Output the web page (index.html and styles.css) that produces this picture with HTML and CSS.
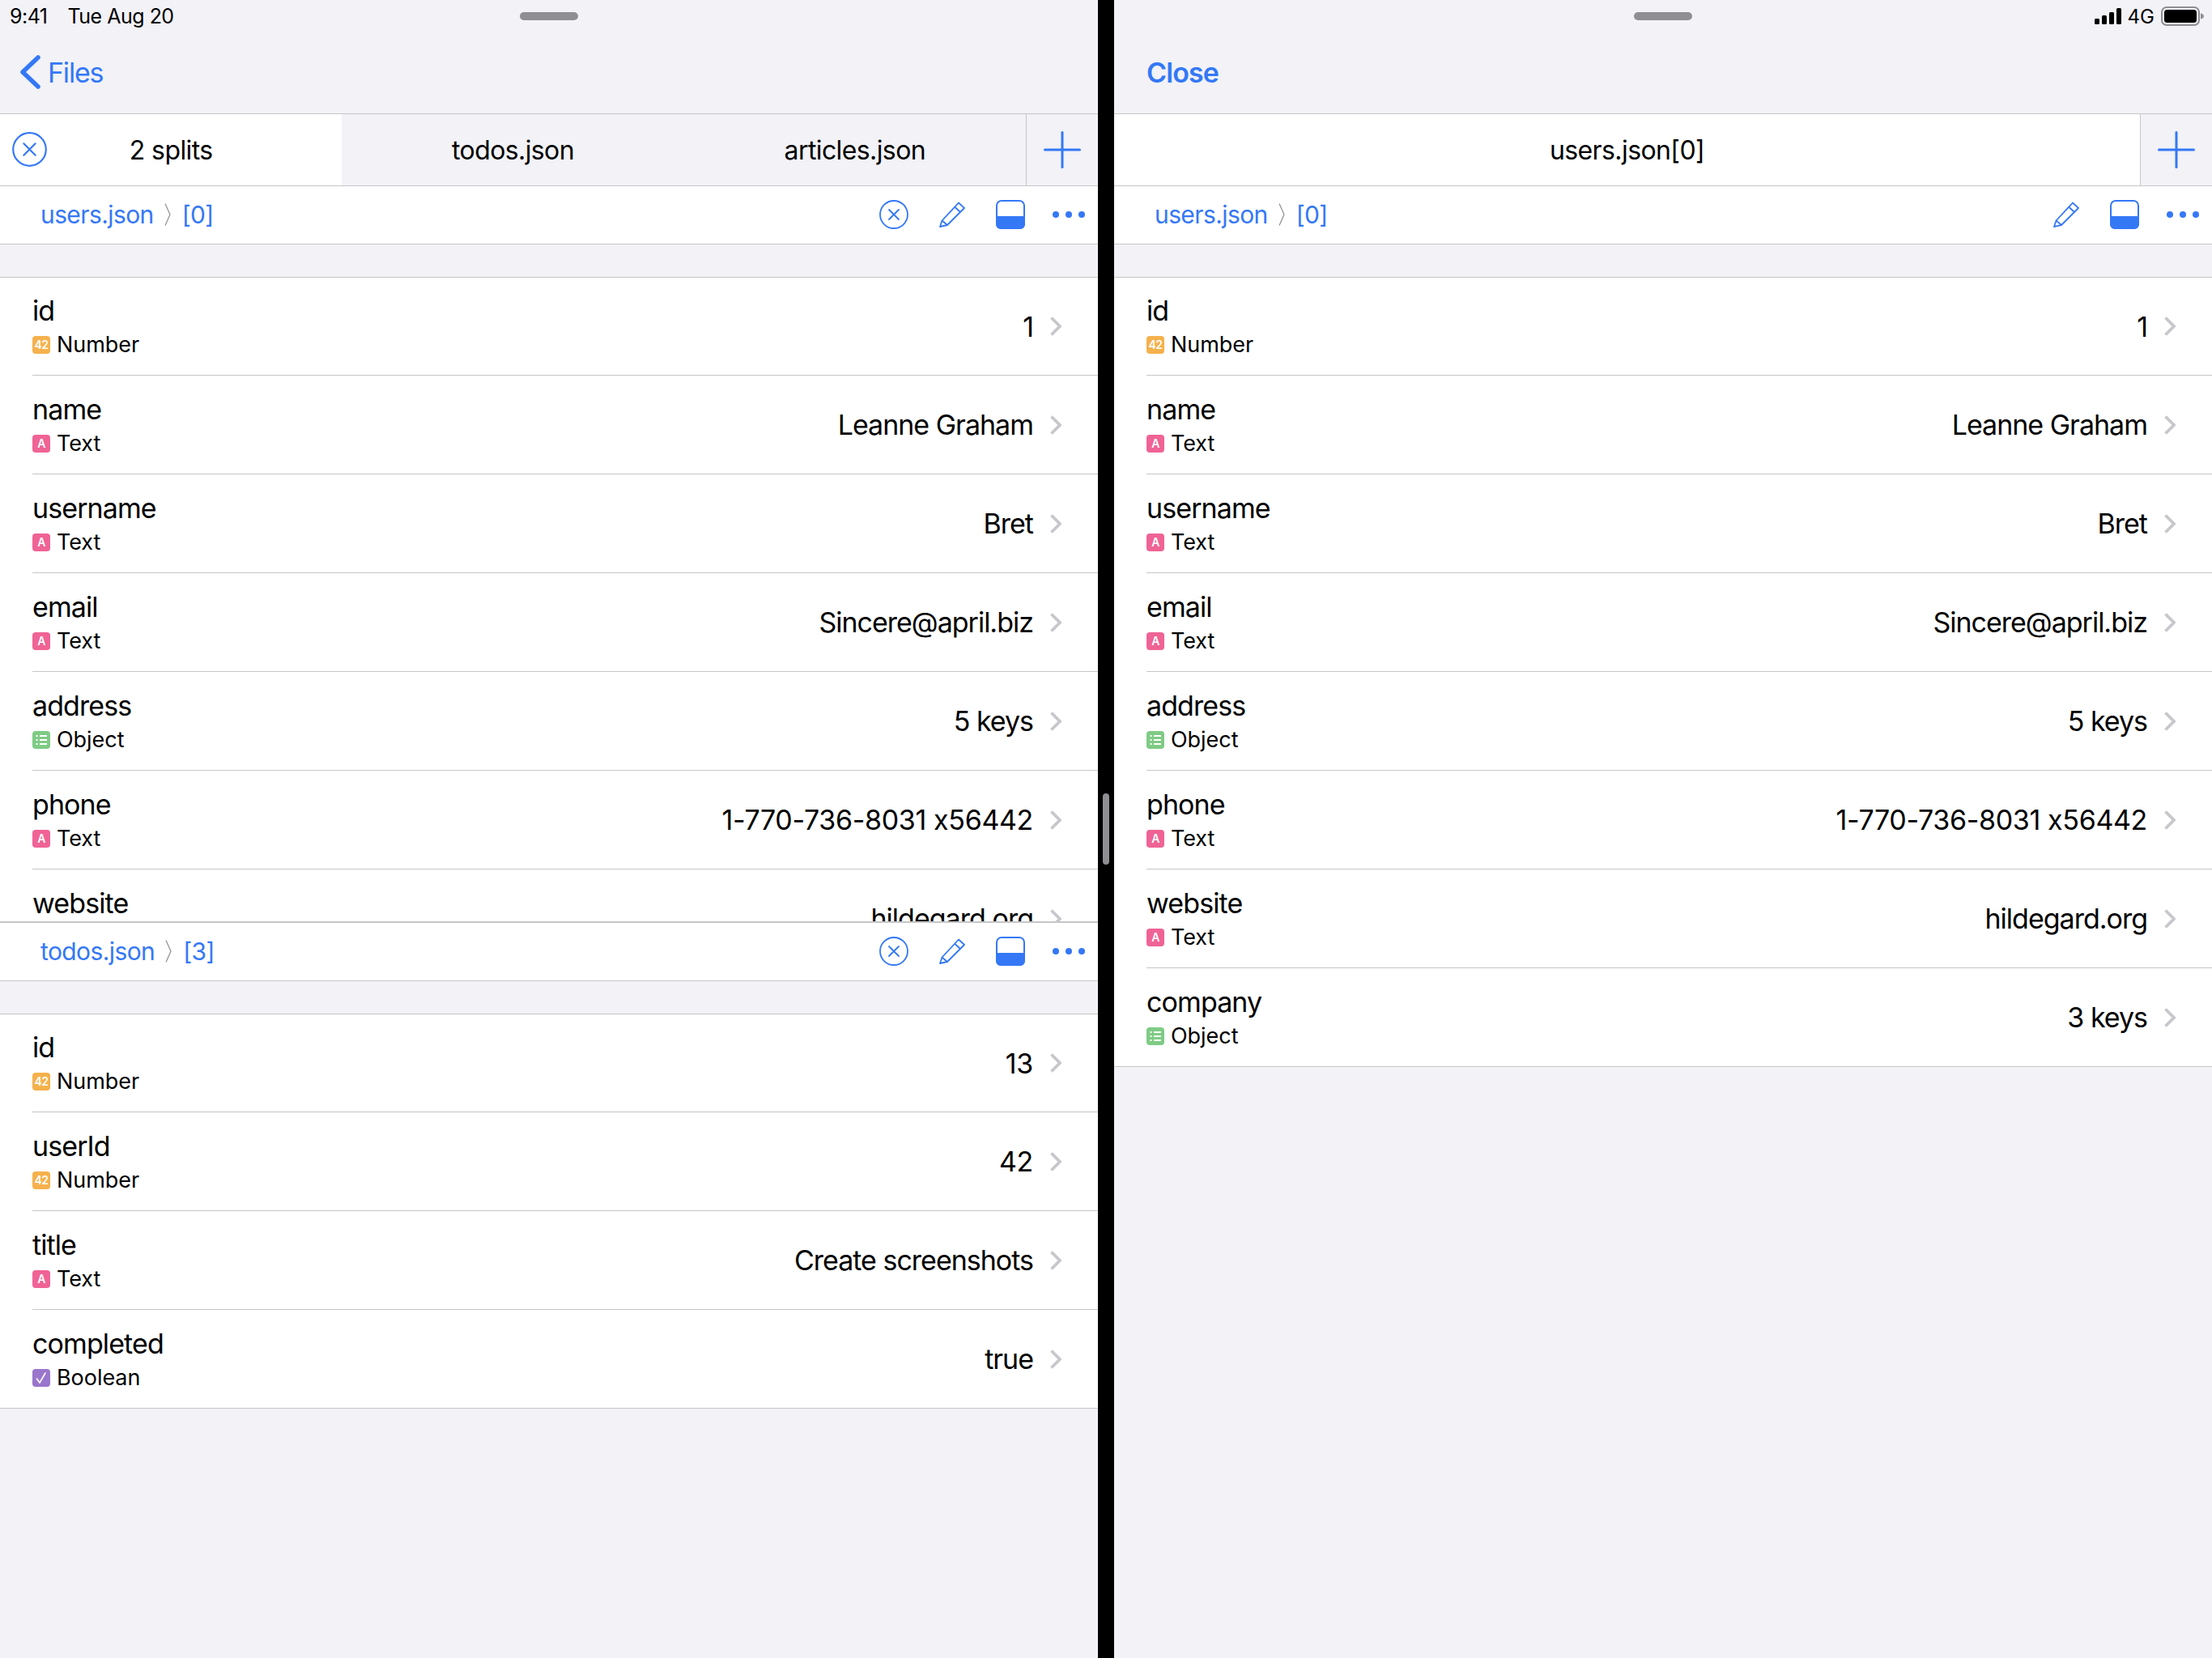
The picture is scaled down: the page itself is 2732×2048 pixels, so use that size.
FILE: index.html
```html
<!DOCTYPE html>
<html lang="en">

<head>
    <meta charset="UTF-8">
    <title>JSON Viewer</title>
    <link rel="stylesheet" href="styles.css">
</head>

<body>
    <svg class="defs" width="0" height="0">
        <symbol id="i-close" viewBox="0 0 36 36">
            <circle cx="18" cy="18" r="17" fill="none" stroke="currentColor" stroke-width="1.8" />
            <path d="M12 12L24 24M24 12L12 24" fill="none" stroke="currentColor" stroke-width="1.8" stroke-linecap="round" />
        </symbol>
        <symbol id="i-pencil" viewBox="0 0 32 32">
            <path d="M1 31L3.5 23.5L24 1.5L31 8L10 29ZM3.5 23.5L10 29M19 6.5L26 13" fill="none" stroke="currentColor" stroke-width="1.8" stroke-linejoin="round" />
        </symbol>
        <symbol id="i-panel" viewBox="0 0 36 36">
            <rect x="1" y="1" width="34" height="34" rx="6" fill="none" stroke="currentColor" stroke-width="2" />
            <path d="M0 20H36V30A6 6 0 0 1 30 36H6A6 6 0 0 1 0 30Z" fill="currentColor" />
        </symbol>
        <symbol id="i-dots" viewBox="0 0 40 8">
            <circle cx="4" cy="4" r="4" fill="currentColor" />
            <circle cx="20" cy="4" r="4" fill="currentColor" />
            <circle cx="36" cy="4" r="4" fill="currentColor" />
        </symbol>
        <symbol id="i-plus" viewBox="0 0 46 46">
            <path d="M23 1.5V44.5M1.5 23H44.5" fill="none" stroke="currentColor" stroke-width="3" stroke-linecap="round" />
        </symbol>
        <symbol id="i-chev" viewBox="0 0 14 24">
            <path d="M1.5 1.5L12 12L1.5 22.5" fill="none" stroke="currentColor" stroke-width="3.8" />
        </symbol>
        <symbol id="i-crumb" viewBox="0 0 8 28">
            <path d="M1 0.5L7 14L1 27.5" fill="none" stroke="currentColor" stroke-width="1.2" />
        </symbol>
        <symbol id="i-object" viewBox="0 0 22 22">
            <path d="M4.5 6H6.5M9 6H18M4.5 11H6.5M9 11H18M4.5 16H6.5M9 16H18" fill="none" stroke="#fff" stroke-width="2" />
        </symbol>
        <symbol id="i-check" viewBox="0 0 22 22">
            <path d="M5.5 12L9 17L16 5" fill="none" stroke="#fff" stroke-width="1.6" stroke-linecap="round" />
        </symbol>
    </svg>

    <div class="app">
        <div class="pane">
            <div class="status">
                <div class="status-left"><span>9:41</span><span>Tue Aug 20</span></div>
                <div class="home-grip"></div>
                <div></div>
            </div>
            <div class="nav">
                <svg class="back" width="25" height="42" viewBox="0 0 25 42"><path d="M22 3L3 21L22 39" fill="none" stroke="currentColor" stroke-width="5.5" stroke-linecap="round" stroke-linejoin="round" /></svg>
                <span class="nav-link">Files</span>
            </div>
            <div class="tabs">
                <div class="tab tab-on">
                    <svg class="tab-close" width="43" height="43"><use href="#i-close" /></svg>
                    2 splits
                </div>
                <div class="tab">todos.json</div>
                <div class="tab">articles.json</div>
                <div class="tab-add"><svg width="46" height="46"><use href="#i-plus" /></svg></div>
            </div>

            <div class="split split-top">
                <div class="crumbs">
                    <span>users.json</span>
                    <svg class="crumb-sep" width="8" height="28"><use href="#i-crumb" /></svg>
                    <span>[0]</span>
                    <div class="tools">
                        <svg width="36" height="36"><use href="#i-close" /></svg>
                        <svg width="32" height="32"><use href="#i-pencil" /></svg>
                        <svg width="36" height="36"><use href="#i-panel" /></svg>
                        <svg class="dots" width="40" height="8"><use href="#i-dots" /></svg>
                    </div>
                </div>
                <div class="list">
                    <div class="row"><div class="row-in">
                        <div class="key"><div class="key-name">id</div><div class="key-type"><span class="badge b-num">42</span>Number</div></div>
                        <div class="val">1</div><svg class="chev" width="14" height="24"><use href="#i-chev" /></svg>
                    </div></div>
                    <div class="row"><div class="row-in">
                        <div class="key"><div class="key-name">name</div><div class="key-type"><span class="badge b-text">A</span>Text</div></div>
                        <div class="val">Leanne Graham</div><svg class="chev" width="14" height="24"><use href="#i-chev" /></svg>
                    </div></div>
                    <div class="row"><div class="row-in">
                        <div class="key"><div class="key-name">username</div><div class="key-type"><span class="badge b-text">A</span>Text</div></div>
                        <div class="val">Bret</div><svg class="chev" width="14" height="24"><use href="#i-chev" /></svg>
                    </div></div>
                    <div class="row"><div class="row-in">
                        <div class="key"><div class="key-name">email</div><div class="key-type"><span class="badge b-text">A</span>Text</div></div>
                        <div class="val">Sincere@april.biz</div><svg class="chev" width="14" height="24"><use href="#i-chev" /></svg>
                    </div></div>
                    <div class="row"><div class="row-in">
                        <div class="key"><div class="key-name">address</div><div class="key-type"><span class="badge b-obj"><svg width="22" height="22"><use href="#i-object" /></svg></span>Object</div></div>
                        <div class="val">5 keys</div><svg class="chev" width="14" height="24"><use href="#i-chev" /></svg>
                    </div></div>
                    <div class="row"><div class="row-in">
                        <div class="key"><div class="key-name">phone</div><div class="key-type"><span class="badge b-text">A</span>Text</div></div>
                        <div class="val val-num">1-770-736-8031 x56442</div><svg class="chev" width="14" height="24"><use href="#i-chev" /></svg>
                    </div></div>
                    <div class="row"><div class="row-in">
                        <div class="key"><div class="key-name">website</div><div class="key-type"></div></div>
                        <div class="val">hildegard.org</div><svg class="chev" width="14" height="24"><use href="#i-chev" /></svg>
                    </div></div>
                </div>
            </div>

            <div class="split">
                <div class="crumbs">
                    <span>todos.json</span>
                    <svg class="crumb-sep" width="8" height="28"><use href="#i-crumb" /></svg>
                    <span>[3]</span>
                    <div class="tools">
                        <svg width="36" height="36"><use href="#i-close" /></svg>
                        <svg width="32" height="32"><use href="#i-pencil" /></svg>
                        <svg width="36" height="36"><use href="#i-panel" /></svg>
                        <svg class="dots" width="40" height="8"><use href="#i-dots" /></svg>
                    </div>
                </div>
                <div class="list">
                    <div class="row"><div class="row-in">
                        <div class="key"><div class="key-name">id</div><div class="key-type"><span class="badge b-num">42</span>Number</div></div>
                        <div class="val val-num">13</div><svg class="chev" width="14" height="24"><use href="#i-chev" /></svg>
                    </div></div>
                    <div class="row"><div class="row-in">
                        <div class="key"><div class="key-name">userId</div><div class="key-type"><span class="badge b-num">42</span>Number</div></div>
                        <div class="val val-num">42</div><svg class="chev" width="14" height="24"><use href="#i-chev" /></svg>
                    </div></div>
                    <div class="row"><div class="row-in">
                        <div class="key"><div class="key-name">title</div><div class="key-type"><span class="badge b-text">A</span>Text</div></div>
                        <div class="val">Create screenshots</div><svg class="chev" width="14" height="24"><use href="#i-chev" /></svg>
                    </div></div>
                    <div class="row"><div class="row-in">
                        <div class="key"><div class="key-name">completed</div><div class="key-type"><span class="badge b-bool"><svg width="22" height="22"><use href="#i-check" /></svg></span>Boolean</div></div>
                        <div class="val">true</div><svg class="chev" width="14" height="24"><use href="#i-chev" /></svg>
                    </div></div>
                </div>
            </div>
        </div>

        <div class="divider"><div class="divider-grip"></div></div>

        <div class="pane">
            <div class="status">
                <div></div>
                <div class="home-grip"></div>
                <div class="status-right">
                    <svg width="33" height="20" viewBox="0 0 33 20">
                        <rect x="0" y="13" width="6" height="7" rx="1.5" />
                        <rect x="9" y="9" width="6" height="11" rx="1.5" />
                        <rect x="18" y="5" width="6" height="15" rx="1.5" />
                        <rect x="27" y="0" width="6" height="20" rx="1.5" />
                    </svg>
                    <span>4G</span>
                    <svg width="53" height="24" viewBox="0 0 53 24">
                        <rect x="1" y="1" width="46" height="22" rx="6" fill="none" stroke="#8e8e93" stroke-width="2" />
                        <rect x="4" y="4" width="40" height="16" rx="3.5" />
                        <path d="M49 8.5C51.5 9 53 10.5 53 12C53 13.5 51.5 15 49 15.5Z" fill="#8e8e93" />
                    </svg>
                </div>
            </div>
            <div class="nav">
                <span class="nav-link nav-close">Close</span>
            </div>
            <div class="tabs">
                <div class="tab tab-on">users.json[0]</div>
                <div class="tab-add"><svg width="46" height="46"><use href="#i-plus" /></svg></div>
            </div>

            <div class="split">
                <div class="crumbs">
                    <span>users.json</span>
                    <svg class="crumb-sep" width="8" height="28"><use href="#i-crumb" /></svg>
                    <span>[0]</span>
                    <div class="tools">
                        <svg width="32" height="32"><use href="#i-pencil" /></svg>
                        <svg width="36" height="36"><use href="#i-panel" /></svg>
                        <svg class="dots" width="40" height="8"><use href="#i-dots" /></svg>
                    </div>
                </div>
                <div class="list">
                    <div class="row"><div class="row-in">
                        <div class="key"><div class="key-name">id</div><div class="key-type"><span class="badge b-num">42</span>Number</div></div>
                        <div class="val">1</div><svg class="chev" width="14" height="24"><use href="#i-chev" /></svg>
                    </div></div>
                    <div class="row"><div class="row-in">
                        <div class="key"><div class="key-name">name</div><div class="key-type"><span class="badge b-text">A</span>Text</div></div>
                        <div class="val">Leanne Graham</div><svg class="chev" width="14" height="24"><use href="#i-chev" /></svg>
                    </div></div>
                    <div class="row"><div class="row-in">
                        <div class="key"><div class="key-name">username</div><div class="key-type"><span class="badge b-text">A</span>Text</div></div>
                        <div class="val">Bret</div><svg class="chev" width="14" height="24"><use href="#i-chev" /></svg>
                    </div></div>
                    <div class="row"><div class="row-in">
                        <div class="key"><div class="key-name">email</div><div class="key-type"><span class="badge b-text">A</span>Text</div></div>
                        <div class="val">Sincere@april.biz</div><svg class="chev" width="14" height="24"><use href="#i-chev" /></svg>
                    </div></div>
                    <div class="row"><div class="row-in">
                        <div class="key"><div class="key-name">address</div><div class="key-type"><span class="badge b-obj"><svg width="22" height="22"><use href="#i-object" /></svg></span>Object</div></div>
                        <div class="val">5 keys</div><svg class="chev" width="14" height="24"><use href="#i-chev" /></svg>
                    </div></div>
                    <div class="row"><div class="row-in">
                        <div class="key"><div class="key-name">phone</div><div class="key-type"><span class="badge b-text">A</span>Text</div></div>
                        <div class="val val-num">1-770-736-8031 x56442</div><svg class="chev" width="14" height="24"><use href="#i-chev" /></svg>
                    </div></div>
                    <div class="row"><div class="row-in">
                        <div class="key"><div class="key-name">website</div><div class="key-type"><span class="badge b-text">A</span>Text</div></div>
                        <div class="val">hildegard.org</div><svg class="chev" width="14" height="24"><use href="#i-chev" /></svg>
                    </div></div>
                    <div class="row"><div class="row-in">
                        <div class="key"><div class="key-name">company</div><div class="key-type"><span class="badge b-obj"><svg width="22" height="22"><use href="#i-object" /></svg></span>Object</div></div>
                        <div class="val">3 keys</div><svg class="chev" width="14" height="24"><use href="#i-chev" /></svg>
                    </div></div>
                </div>
            </div>
        </div>
    </div>
</body>

</html>
```

FILE: styles.css
```css
body {
    margin: 0;
    font-family: Inter, "Noto Sans", sans-serif;
    color: #000;
    background-color: #f2f2f7;
}

.defs {
    display: block;
    height: 0;
}

.app {
    display: flex;
    width: 2732px;
    height: 2048px;
    overflow: hidden;
}

.pane {
    width: 1356px;
    flex: none;
    display: flex;
    flex-direction: column;
}

.divider {
    width: 20px;
    flex: none;
    background-color: #000;
    display: flex;
    align-items: center;
    justify-content: center;
}

.divider-grip {
    width: 8px;
    height: 88px;
    border-radius: 4px;
    background-color: #8e8e93;
}

.status {
    height: 40px;
    display: grid;
    grid-template-columns: 1fr 72px 1fr;
    align-items: center;
    font-size: 25px;
}

.status-left {
    display: flex;
    gap: 25px;
    padding-left: 12px;
    letter-spacing: -0.5px;
}

.status-right {
    display: flex;
    align-items: center;
    justify-content: flex-end;
    gap: 8px;
    padding-right: 10px;
    font-size: 24px;
}

.home-grip {
    height: 10px;
    border-radius: 5px;
    background-color: #8e8e93;
}

.nav {
    height: 101px;
    display: flex;
    align-items: center;
    padding: 0 0 2px 25px;
    box-sizing: border-box;
    color: #3478f6;
    border-bottom: 1px solid #c6c6c8;
}

.back {
    margin-right: 9px;
}

.nav-link {
    font-size: 34px;
    letter-spacing: -1.2px;
}

.nav-close {
    margin-left: 15px;
    font-weight: 600;
    letter-spacing: -0.9px;
}

.tabs {
    display: flex;
    height: 89px;
    box-sizing: border-box;
    border-bottom: 1px solid #c6c6c8;
}

.tab {
    flex: 1;
    position: relative;
    display: flex;
    align-items: center;
    justify-content: center;
    font-size: 32px;
    letter-spacing: -0.6px;
}

.tab-on {
    background-color: #fff;
}

.tab-close {
    position: absolute;
    left: 15px;
    top: 22px;
    color: #3478f6;
}

.tab-add {
    width: 89px;
    flex: none;
    box-sizing: border-box;
    border-left: 1px solid #c6c6c8;
    display: flex;
    align-items: center;
    justify-content: center;
    color: #3478f6;
}

.split {
    flex: 1;
    min-height: 0;
}

.split-top {
    flex: none;
    height: 910px;
    box-sizing: border-box;
    overflow: hidden;
    border-bottom: 2px solid #c6c6c8;
}

.crumbs {
    height: 72px;
    box-sizing: border-box;
    border-bottom: 1px solid #c6c6c8;
    background-color: #fff;
    display: flex;
    align-items: center;
    padding: 0 16px 1px 50px;
    font-size: 30px;
    letter-spacing: -0.6px;
    color: #3478f6;
}

.crumb-sep {
    margin: 0 14px 0 13px;
    color: #8e8e93;
}

.tools {
    margin-left: auto;
    display: flex;
    align-items: center;
    gap: 38px;
}

.dots {
    margin-left: -4px;
}

.list {
    margin-top: 40px;
    background-color: #fff;
    border-top: 1px solid #c6c6c8;
    border-bottom: 1px solid #c6c6c8;
}

.row {
    padding-left: 40px;
}

.row-in {
    height: 122px;
    box-sizing: border-box;
    display: flex;
    align-items: center;
    padding-right: 45px;
    border-bottom: 1px solid #c6c6c8;
}

.row:first-child .row-in {
    height: 121px;
}

.row:last-child .row-in {
    height: 121px;
    border-bottom: none;
}

.key {
    flex: 1;
}

.key-name {
    font-size: 34px;
    line-height: 42px;
    letter-spacing: -0.9px;
}

.key-type {
    display: flex;
    align-items: center;
    gap: 8px;
    margin-top: 4px;
    min-height: 34px;
    font-size: 27px;
    line-height: 34px;
    letter-spacing: -0.05px;
}

.badge {
    width: 22px;
    height: 22px;
    border-radius: 4px;
    color: #fff;
    font-size: 14px;
    font-weight: 600;
    letter-spacing: -0.6px;
    line-height: 22px;
    text-align: center;
    display: block;
}

.badge svg {
    display: block;
}

.b-num {
    background-color: #f5b14c;
}

.b-text {
    background-color: #ef6395;
}

.b-obj {
    background-color: #7fcb85;
}

.b-bool {
    background-color: #9a76cc;
}

.val {
    font-size: 34px;
    letter-spacing: -1px;
}

.val-num {
    letter-spacing: -0.35px;
}

.chev {
    margin-left: 21px;
    color: #c7c7cc;
}
```
